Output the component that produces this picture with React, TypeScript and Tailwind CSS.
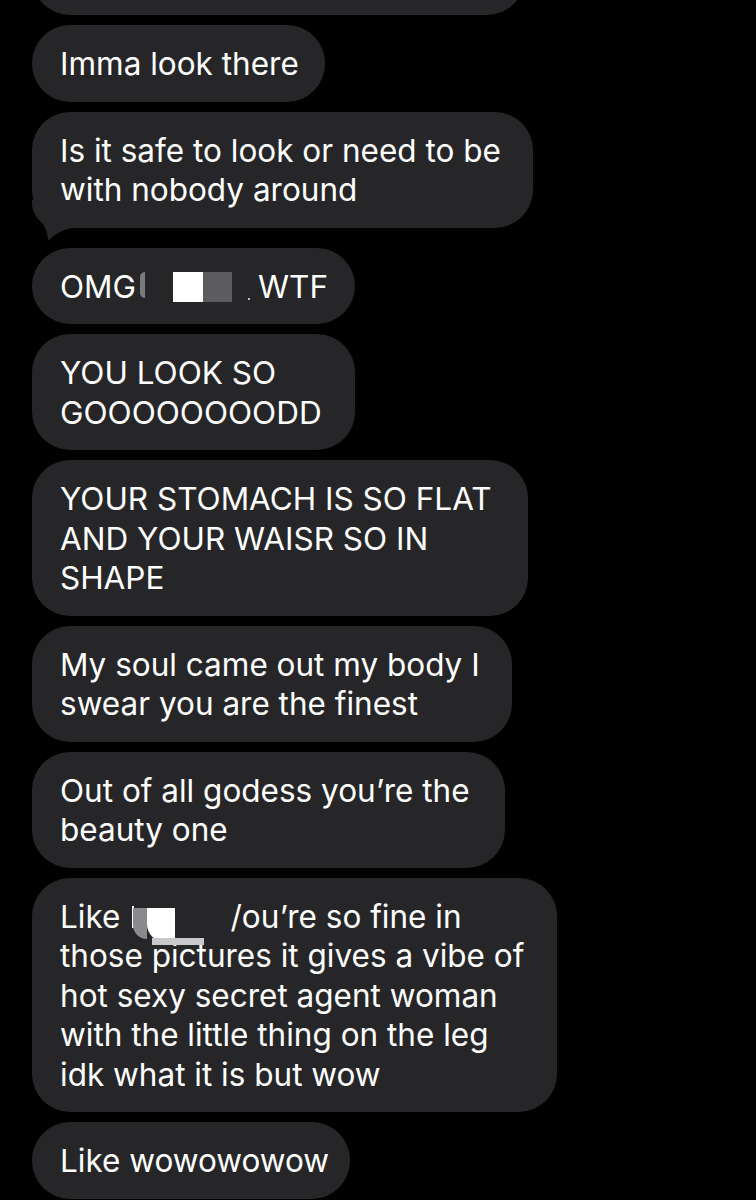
import type { ReactNode } from "react"

// Received-message bubbles, dark mode
const FONT = "font-['Inter','Noto_Sans',sans-serif]"

function Bubble({ children, tail = false, className = "" }: { children: ReactNode; tail?: boolean; className?: string }) {
  return (
    <div className={`relative rounded-[38px] bg-[#262628] pl-[28px] pt-[19px] pb-[18px] text-[31.5px] leading-[39.5px] text-white whitespace-nowrap ${className}`}>
      {children}
      {tail && (
        <svg aria-hidden className="absolute left-0 bottom-[-13px]" width="48" height="41" viewBox="0 0 48 41">
          <path d="M0 0 V5 C1 14 6 19 11 24 C14 29 16 35 16 41 C21 36 28 30 40 28 H48 V0 Z" fill="#262628" />
        </svg>
      )}
    </div>
  )
}

// Scribbled-out redaction between "OMG" and "WTF"
function RedactOmg() {
  return (
    <span className="relative inline-block h-[39px] w-[122px] align-top">
      <span className="absolute left-[4px] top-[5px] h-[26px] w-[5px] rounded-l-full bg-[#7a7a7e]" />
      <span className="absolute left-[37px] top-[5px] h-[30px] w-[30px] bg-white" />
      <span className="absolute left-[67px] top-[5px] h-[30px] w-[29px] bg-[#5c5c60]" />
      <span className="absolute left-[112px] top-[31px] h-[2px] w-[2px] bg-[#bdbdbd]" />
    </span>
  )
}

// Redaction in the "Like ... you're so fine" bubble
function RedactLike() {
  return (
    <span className="relative inline-block h-[39px] w-[110px] align-top">
      <span className="absolute left-[12px] top-[9px] h-[22px] w-[2px] bg-white" />
      <span className="absolute left-[13px] top-[11px] h-[31px] w-[14px] rounded-bl-[14px] bg-[#8a8a8c]" />
      <span className="absolute left-[27px] top-[11px] h-[34px] w-[28px] rounded-bl-[18px] bg-white" />
      <span className="absolute left-[32px] top-[41px] h-[7px] w-[52px] bg-[#c9c9cb]" />
    </span>
  )
}

export default function App() {
  return (
    <div className={`min-h-[1200px] w-[756px] overflow-hidden bg-black pl-[32px] ${FONT}`}>
      <div className="flex flex-col items-start">
        {/* tail end of the previous bubble, cut off by the screenshot */}
        <div className="-mt-[62px] h-[77px] w-[493px] rounded-[38px] bg-[#262628]" />

        <div className="mt-[10px]">
          <Bubble className="w-[293px]">Imma look there</Bubble>
        </div>
        <div className="mt-[10px]">
          <Bubble tail className="w-[501px]">
            Is it safe to look or need to be
            <br />
            with nobody around
          </Bubble>
        </div>
        <div className="mt-[20px]">
          <Bubble className="w-[323px]">
            OMG<RedactOmg />WTF
          </Bubble>
        </div>
        <div className="mt-[10px]">
          <Bubble className="w-[323px]">
            YOU LOOK SO
            <br />
            GOOOOOOOODD
          </Bubble>
        </div>
        <div className="mt-[10px]">
          <Bubble className="w-[496px]">
            YOUR STOMACH IS SO FLAT
            <br />
            AND YOUR WAISR SO IN
            <br />
            SHAPE
          </Bubble>
        </div>
        <div className="mt-[10px]">
          <Bubble className="w-[480px]">
            My soul came out my body I
            <br />
            swear you are the finest
          </Bubble>
        </div>
        <div className="mt-[10px]">
          <Bubble className="w-[473px]">
            Out of all godess you’re the
            <br />
            beauty one
          </Bubble>
        </div>
        <div className="mt-[10px]">
          <Bubble className="w-[525px]">
            Like<RedactLike />/ou’re so fine in
            <br />
            those pictures it gives a vibe of
            <br />
            hot sexy secret agent woman
            <br />
            with the little thing on the leg
            <br />
            idk what it is but wow
          </Bubble>
        </div>
        <div className="mt-[10px]">
          <Bubble className="w-[318px]">Like wowowowow</Bubble>
        </div>
      </div>
    </div>
  )
}
